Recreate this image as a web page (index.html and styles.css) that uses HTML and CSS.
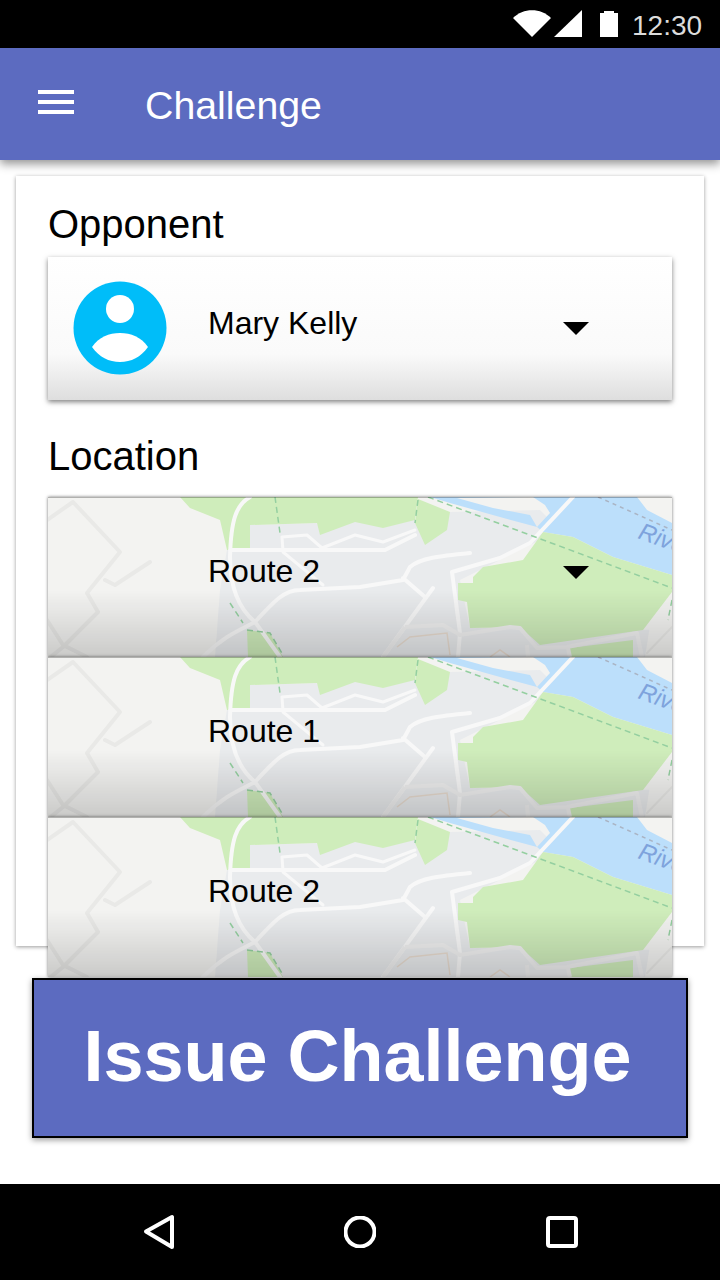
FILE: index.html
```html
<!DOCTYPE html>
<html lang="en">
<head>
<meta charset="utf-8">
<title>Challenge</title>
<link rel="stylesheet" href="styles.css">
</head>
<body>
<svg class="defs" width="0" height="0" aria-hidden="true">
  <defs>
    <symbol id="map" viewBox="48 497 624 160" preserveAspectRatio="none">
      <rect class="m-land" x="48" y="497" width="624" height="160"/>
      <polygon class="m-urban" points="215,657 220,590 227,550 250,525 415,520 450,512 540,510 560,530 460,580 470,628 672,630 672,657"/>
      <polygon class="m-green" points="180,497 418,497 415,520 383,528 355,522 320,535 317,523 250,525 250,550 227,550 220,520 190,508"/>
      <polygon class="m-green" points="418,499 450,512 447,530 425,545 415,523"/>
      <polygon class="m-water" points="430,497 533,497 457,498 493,508 530,515 537,527 500,517 450,503"/>
      <polygon class="m-water" points="533,497 637,497 647,510 672,523 672,575 613,557 573,537 543,532 537,527 550,513 545,505"/>
      <polygon class="m-green" points="543,532 573,537 613,557 672,575 672,592 643,630 540,645 520,627 470,628 467,602 458,600 458,583 473,583 473,577 483,567 523,560"/>
      <polygon class="m-land" points="650,625 672,595 672,657 645,657"/>
      <polygon class="m-green" points="247,630 270,633 283,657 248,657"/>
      <polygon class="m-green" points="570,648 633,640 633,657 570,657"/>
      <path class="m-minor" d="M47 520 L73 502 L120 552 L87 593 L98 612 L63 647 L47 660 M105 580 L115 585 L150 562 M47 620 L63 645 L87 657"/>
      <path class="m-road-w" d="M250 497 C236 505 231 520 230 557 C230 585 238 608 255 622 M230 550 L385 550 L415 535 M255 622 C275 600 285 590 300 590 L360 587 L403 580 L410 567 C420 558 440 556 470 553 M403 578 L425 597 M255 622 L280 657 M255 622 C240 630 225 635 203 657"/>
      <path class="m-road-w" d="M383 657 L433 588 M452 572 L460 633 L458 657 M452 572 L500 558 L530 543 L573 497"/>
      <path class="m-road-w thin" d="M282 537 L307 535 L322 548 L355 535 L383 542 L415 530 M282 537 L283 552 L323 585"/>
      <path class="m-road-g" d="M405 627 L443 625 L460 635 L510 627 L520 628 L537 648 L567 647 L637 633 L642 657 M527 645 L528 657 M568 648 L570 657 M405 627 L383 657"/>
      <path class="m-tan" d="M397 647 L410 637 L447 633 L450 655 M490 657 L500 650 L510 657"/>
      <path class="m-path-g" d="M275 497 L280 533 M230 603 L243 623 M247 630 L270 633 L283 655 M428 497 L672 588 M418 500 L415 523 M672 600 L668 620"/>
      <path class="m-path-b" d="M598 497 L672 530"/>
      <path class="m-minor thin" d="M647 653 L672 627"/>
      <text class="m-label" transform="translate(637 538) rotate(20)">River</text>
    </symbol>
  </defs>
</svg>

<header class="status">
  <svg class="st-wifi" width="38" height="27" viewBox="0 0 38 27"><path class="fill-w" d="M0 8 C10 -2.500 28 -2.500 38 8 L19 27 Z"/></svg>
  <svg class="st-signal" width="28" height="27" viewBox="0 0 28 27"><path class="fill-w" d="M0 27 L28 0 L28 27 Z"/></svg>
  <svg class="st-batt" width="18" height="27" viewBox="0 0 18 27"><path class="fill-w" d="M4 1 L14 1 L14 3 L18 3 L18 27 L0 27 L0 3 L4 3 Z"/></svg>
  <span class="st-time">12:30</span>
</header>

<div class="appbar">
  <svg class="menu" width="36" height="24" viewBox="0 0 36 24"><path class="fill-w" d="M0 0 H36 V4 H0 Z M0 10 H36 V14 H0 Z M0 20 H36 V24 H0 Z"/></svg>
  <h1 class="title">Challenge</h1>
</div>

<main class="content">
  <section class="card">
    <h2 class="label">Opponent</h2>
    <div class="select opponent">
      <svg class="avatar" width="94" height="94" viewBox="0 0 94 94">
        <circle class="av-bg" cx="47" cy="47" r="46.500"/>
        <circle class="fill-w" cx="47" cy="28" r="14"/>
        <path class="fill-w" d="M19 66 C26 56 36 52 47 52 C58 52 68 56 75 66 C68 76 58 81 47 81 C36 81 26 76 19 66 Z"/>
      </svg>
      <span class="name">Mary Kelly</span>
      <svg class="arrow" width="26" height="13" viewBox="0 0 26 13"><path d="M0 0 H26 L13 13 Z"/></svg>
    </div>
    <h2 class="label location">Location</h2>
    <div class="stack">
      <div class="select tile">
        <svg class="map"><use href="#map"/></svg>
        <span class="name">Route 2</span>
        <svg class="arrow" width="26" height="13" viewBox="0 0 26 13"><path d="M0 0 H26 L13 13 Z"/></svg>
      </div>
      <div class="select tile">
        <svg class="map"><use href="#map"/></svg>
        <span class="name">Route 1</span>
      </div>
      <div class="select tile">
        <svg class="map"><use href="#map"/></svg>
        <span class="name">Route 2</span>
      </div>
    </div>
  </section>
  <button class="issue" type="button">Issue Challenge</button>
</main>

<nav class="navbar">
  <svg class="nav-back" width="34" height="36" viewBox="0 0 34 36"><path class="nav-stroke" d="M3 17.500 L29 3 V33 Z"/></svg>
  <svg class="nav-home" width="32" height="32" viewBox="0 0 32 32"><circle class="nav-stroke" cx="16" cy="16" r="14.500"/></svg>
  <svg class="nav-recent" width="32" height="32" viewBox="0 0 32 32"><rect class="nav-stroke" x="2" y="2" width="28" height="28" rx="2"/></svg>
</nav>
</body>
</html>
```
FILE: styles.css
```css
* { box-sizing: border-box; }
html, body { margin: 0; padding: 0; }
body {
  width: 720px;
  height: 1280px;
  display: flex;
  flex-direction: column;
  overflow: hidden;
  background: #fff;
  font-family: "Liberation Sans", Arial, sans-serif;
  color: #000;
}
.defs { position: absolute; }
.fill-w { fill: #fff; }

.status {
  height: 48px;
  flex: none;
  background: #000;
  display: flex;
  align-items: center;
  padding-left: 513px;
}
.st-wifi { margin-top: -1px; }
.st-signal { margin-left: 3px; margin-top: -1px; }
.st-batt { margin-left: 18px; margin-top: -1px; }
.st-time {
  margin-left: 14px;
  font-family: "Liberation Sans", sans-serif;
  font-size: 28px;
  color: #dcdcdc;
  line-height: 48px;
  margin-top: 3px;
}

.appbar {
  height: 112px;
  flex: none;
  background: #5c6bc0;
  display: flex;
  align-items: center;
  padding-left: 38px;
  box-shadow: 0 4px 9px rgba(0, 0, 0, .42);
  position: relative;
  z-index: 3;
}
.title {
  margin: 3px 0 0 71px;
  font-family: "Liberation Sans", sans-serif;
  font-weight: 400;
  font-size: 39.300px;
  color: #fff;
}
.menu { margin-top: -4px; }

.content {
  flex: 1;
  padding: 16px;
}
.card {
  height: 770px;
  padding: 24px 32px 0;
  background: #fff;
  box-shadow: 0 1px 4px rgba(0, 0, 0, .4);
}
.label {
  margin: 0 0 9px;
  font-size: 40px;
  font-weight: 400;
  line-height: 48px;
}
.location { margin: 32px 0 17px; }

.select {
  display: flex;
  align-items: center;
  box-shadow: 0 2px 5px rgba(0, 0, 0, .5);
}
.opponent {
  height: 143px;
  padding-left: 25px;
  background: linear-gradient(#fff 0, #fafafa 68%, #dedede 100%);
}
.avatar { flex: none; margin-top: -1px; }
.av-bg { fill: #00bdf9; }
.name {
  flex: 1;
  font-size: 32px;
  line-height: 40px;
  position: relative;
}
.opponent .name { margin: -12px 0 0 41px; }
.arrow { flex: none; margin-right: 83px; position: relative; }

.tile {
  height: 160px;
  padding: 0 0 12px 160px;
  position: relative;
  overflow: hidden;
  box-shadow: 0 0 3px rgba(0, 0, 0, .55);
}
.tile::after {
  content: "";
  position: absolute;
  inset: 0;
  background: linear-gradient(rgba(0, 0, 0, 0) 58%, rgba(0, 0, 0, .17) 100%);
  border-top: 1px solid rgba(0, 0, 0, .12);
}
.map {
  position: absolute;
  inset: 0;
  width: 100%;
  height: 100%;
}
.tile .name, .tile .arrow { z-index: 1; }
.tile .arrow { top: 1px; }

.m-land { fill: #f3f3f1; }
.m-urban { fill: #e9ebed; }
.m-green { fill: #cfedbb; }
.m-water { fill: #bcdffb; }
.m-minor { fill: none; stroke: #e9e9e7; stroke-width: 4; stroke-linejoin: round; stroke-linecap: round; }
.m-minor.thin { stroke-width: 2; }
.m-road-w { fill: none; stroke: #f8f8f8; stroke-width: 4; stroke-linejoin: round; stroke-linecap: round; }
.m-road-w.thin { stroke-width: 3; }
.m-road-g { fill: none; stroke: #f0f0f0; stroke-width: 4; stroke-linejoin: round; }
.m-tan { fill: none; stroke: #e8dcd0; stroke-width: 1.500; }
.m-path-g { fill: none; stroke: #94cfa0; stroke-width: 1.500; stroke-dasharray: 6 4; }
.m-path-b { fill: none; stroke: #aab4c4; stroke-width: 1.500; stroke-dasharray: 4 4; }
.m-label { fill: #7ea3dc; font-family: "Liberation Sans", sans-serif; font-style: italic; font-size: 24px; }

.issue {
  display: block;
  position: relative;
  z-index: 2;
  width: 656px;
  height: 160px;
  margin: 32px 16px 0;
  padding: 0 5px 4px 0;
  background: #5c6bc0;
  border: 2px solid #000;
  box-shadow: 0 2px 6px rgba(0, 0, 0, .4);
  color: #fff;
  font-family: "Liberation Sans", Arial, sans-serif;
  font-size: 72px;
  font-weight: 700;
}

.navbar {
  height: 96px;
  flex: none;
  background: #000;
  display: flex;
  align-items: center;
  padding-left: 143px;
}
.nav-stroke { fill: none; stroke: #fff; stroke-width: 4; stroke-linejoin: round; }
.nav-back { flex: none; }
.nav-home { flex: none; margin-left: 167px; }
.nav-recent { flex: none; margin-left: 170px; }
```
